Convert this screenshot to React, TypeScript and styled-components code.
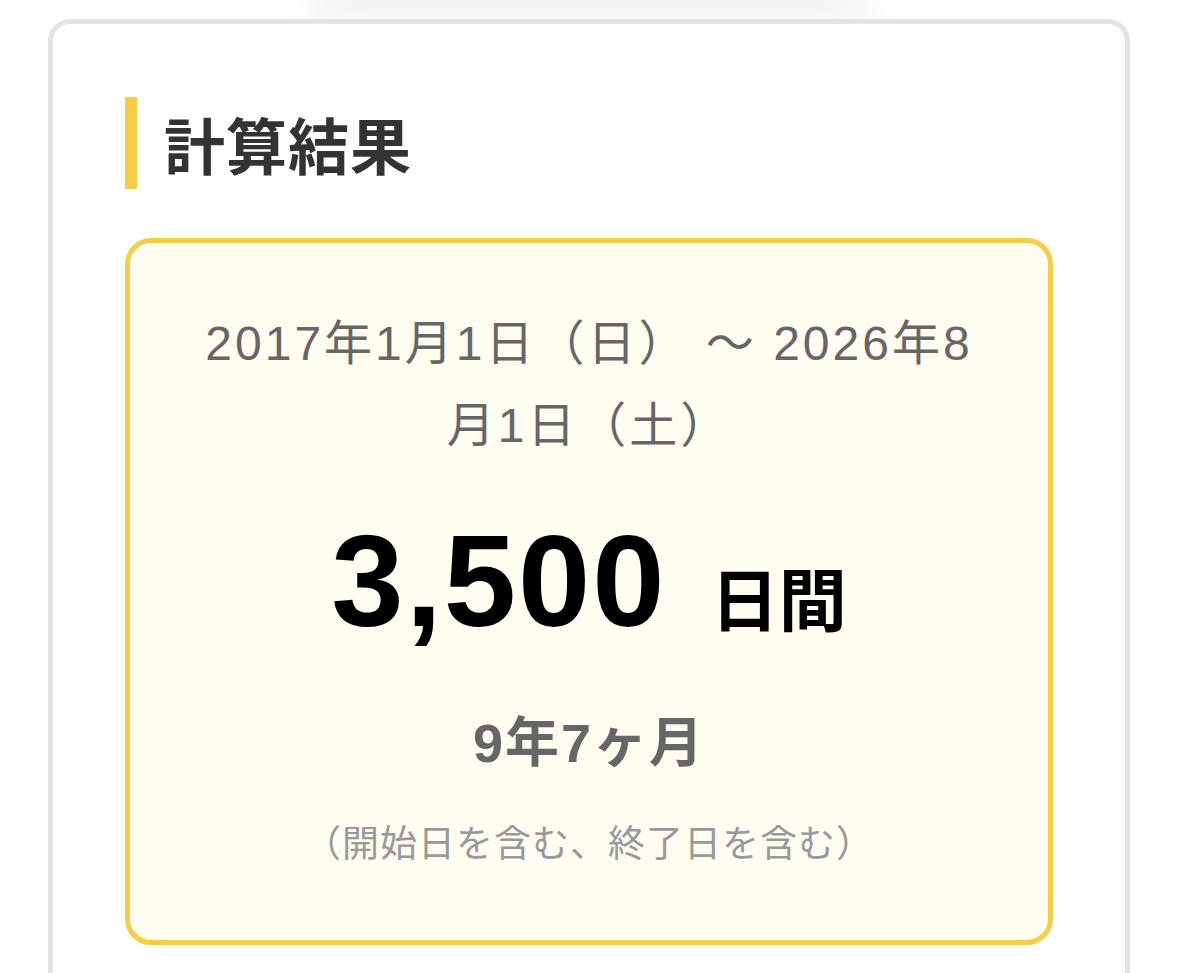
import React from 'react';
import styled, { createGlobalStyle } from 'styled-components';

const GlobalStyle = createGlobalStyle`
  html, body {
    margin: 0;
    padding: 0;
    background: #ffffff;
  }
  body {
    font-family: "Liberation Sans", "Noto Sans CJK JP", sans-serif;
    overflow: hidden;
  }
`;

const Page = styled.div`
  position: relative;
  width: 1179px;
  height: 973px;
  overflow: hidden;
  background: #ffffff;
`;

// soft shadow of the element sitting above the visible area
const TopShade = styled.div`
  width: 560px;
  height: 30px;
  margin: -30px auto 0;
  border-radius: 40px;
  box-shadow: 0 16px 44px rgba(0, 0, 0, 0.08);
`;

const Card = styled.section`
  margin: 19px 49px 0 48px;
  border: 5px solid #e3e3e3;
  border-bottom: none;
  border-radius: 22px 22px 0 0;
  padding: 73px 72px 40px;
  background: #ffffff;
`;

const Heading = styled.h2`
  margin: 0;
  height: 92px;
  display: flex;
  align-items: center;
  padding-left: 27px;
  border-left: 12px solid #f6cd45;
  font-family: "Noto Sans CJK JP", sans-serif;
  font-size: 61px;
  font-weight: 700;
  color: #333333;
  letter-spacing: 1px;
`;

const ResultBox = styled.div`
  margin-top: 49px;
  border: 5px solid #f6cd45;
  border-radius: 26px;
  background: #fffcf0;
  padding: 60px 0 72px;
  display: flex;
  flex-direction: column;
  align-items: center;
  text-align: center;
`;

const Period = styled.p`
  margin: 0;
  width: 790px;
  font-size: 48px;
  line-height: 82px;
  color: #666666;
  letter-spacing: 3px;
`;

const Total = styled.div`
  margin-top: 44px;
  display: flex;
  align-items: baseline;
  color: #000000;
  font-weight: 700;
`;

const Days = styled.span`
  font-size: 130px;
  line-height: 140px;
  letter-spacing: 2px;
`;

const Unit = styled.span`
  margin-left: 44px;
  font-family: "Noto Sans CJK JP", sans-serif;
  font-size: 68px;
`;

const Span = styled.div`
  margin-top: 48px;
  font-size: 54px;
  font-weight: 700;
  color: #666666;
  letter-spacing: 2px;
`;

const Note = styled.div`
  margin-top: 36px;
  font-family: "Noto Sans CJK JP", sans-serif;
  font-size: 37px;
  color: #999999;
  letter-spacing: 1px;
`;

export default function App() {
  return (
    <>
      <GlobalStyle />
      <Page>
        <TopShade />
        <Card>
          <Heading>計算結果</Heading>
          <ResultBox>
            <Period>2017年1月1日（日） ～ 2026年8月1日（土）</Period>
            <Total>
              <Days>3,500</Days>
              <Unit>日間</Unit>
            </Total>
            <Span>9年7ヶ月</Span>
            <Note>（開始日を含む、終了日を含む）</Note>
          </ResultBox>
        </Card>
      </Page>
    </>
  );
}
